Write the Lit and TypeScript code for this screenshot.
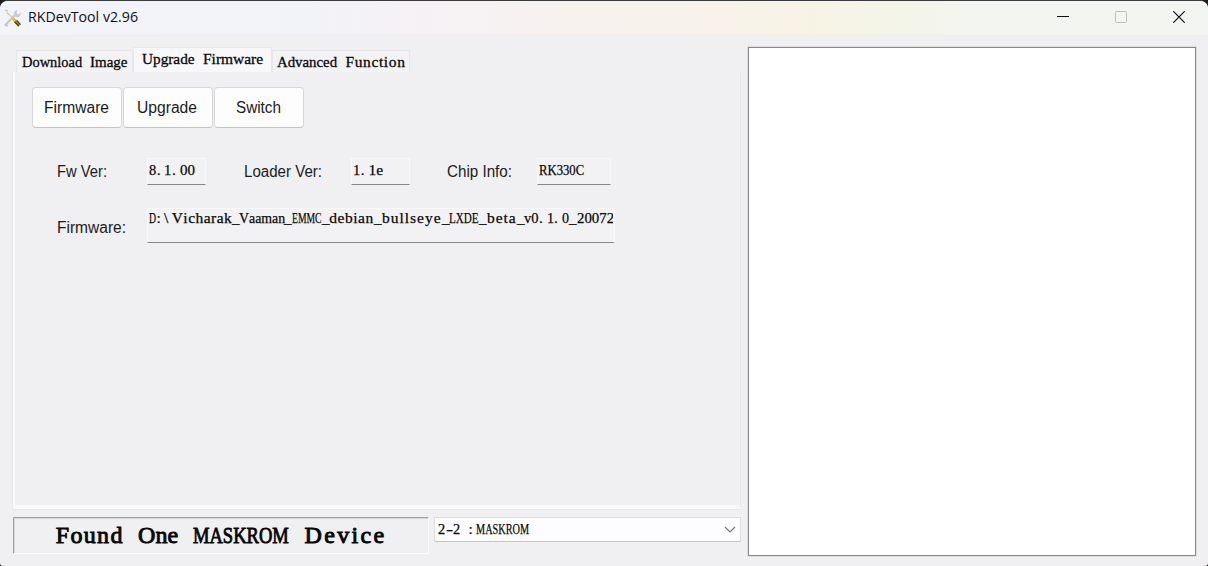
import { LitElement, html, css } from "lit";
import { customElement, property } from "lit/decorators.js";

const ctx = document.createElement("canvas").getContext("2d")!;

/** A run of text scaled to an exact advance width. */
@customElement("fit-text")
class FitText extends LitElement {
  static styles = css`
    :host { display: inline-block; white-space: pre; }
    .run { display: inline-block; white-space: pre; transform-origin: 0 50%; }
  `;
  @property() text = "";
  @property({ type: Number }) width = 0;
  render() {
    const cs = getComputedStyle(this);
    ctx.font = `${cs.fontWeight} ${cs.fontSize} ${cs.fontFamily}`;
    const natural = ctx.measureText(this.text).width;
    return html`<span class="run" style="width:${this.width}px;transform:scaleX(${this.width / natural})">${this.text}</span>`;
  }
}

/** Fixed-pitch serif text: each word takes a whole number of cells. */
@customElement("cell-text")
class CellText extends LitElement {
  static styles = css`
    :host { display: inline-block; white-space: pre; font-family: "Liberation Serif", serif; font-kerning: none; }
    .word { display: inline-block; white-space: pre; }
    .run { display: inline-block; white-space: pre; transform-origin: 0 50%; }
  `;
  @property() text = "";
  @property({ type: Number }) pitch = 7.5;
  render() {
    const cs = getComputedStyle(this);
    ctx.font = `${cs.fontWeight} ${cs.fontSize} ${cs.fontFamily}`;
    const parts = this.text.match(/[A-Za-z0-9]+|[^A-Za-z0-9]/g) ?? [];
    return html`${parts.map((p) => {
      const cell = p.length * this.pitch;
      const natural = ctx.measureText(p).width;
      const word = /[A-Za-z0-9_-]/.test(p);
      const room = cell - (p === "_" ? 0 : this.pitch * 0.06);
      const scale = word && (natural > room || p === "_" || p === "-") ? room / natural : 1;
      const gap = word && scale === 1 ? (room - natural) / p.length : 0;
      return html`<span class="word" style="width:${cell}px"><span class="run" style="letter-spacing:${gap}px;margin-left:${gap / 2}px;transform:scaleX(${scale})">${p}</span></span>`;
    })}`;
  }
}

@customElement("app-root")
class AppRoot extends LitElement {
  static styles = css`
    :host { display: block; width: 1208px; height: 566px; background: #1d1b1c; }
    * { box-sizing: border-box; }
    svg { display: block; }
    .window {
      height: 566px; display: flex; flex-direction: column; overflow: hidden;
      background: #f0eff1; border-top: 1px solid #3b3a3c; border-radius: 8px 8px 3px 3px;
      font: 16px "Liberation Sans", sans-serif; color: #1b1b1b;
    }
    .bar {
      height: 34px; flex: none; display: flex; align-items: center; padding-left: 4px;
      background: linear-gradient(90deg, #f3f4f9 0%, #f1f3f8 25%, #f6f1f5 35%, #f7f2ef 46%, #f8f2ea 60%, #f7f3e4 67%, #f3f5e8 74%, #f3f5f0 80%, #f3f5f2 100%);
    }
    .name { margin: -4px auto 0 6px; font: 15px "Open Sans", sans-serif; color: #111; }
    .ctl { width: 58px; display: flex; justify-content: center; margin-top: -2px; }
    .body { flex: 1; display: flex; padding: 12px 12px 10px 13px; gap: 7px; min-height: 0; }
    .left { width: 728px; display: flex; flex-direction: column; }
    .tabs { height: 25px; display: flex; align-items: flex-end; padding-left: 3px; }
    .tab {
      height: 22px; padding: 2px 0 0 5px; border: 1px solid #e7e6e8; border-bottom: 0;
      background: #f3f2f4; font-size: 15.5px; line-height: 18px; color: #080808; -webkit-text-stroke: .3px #080808;
    }
    .tab.a { width: 117px; }
    .tab.b { width: 139px; height: 25px; background: #f8f8fa; padding-left: 8px; }
    .tab.c { width: 138px; padding-left: 4px; }
    .panel {
      height: 437px; border-left: 2px solid #fafafb; border-right: 1px solid #e6e5e7;
      border-bottom: 4px solid #f9f8fa; padding: 15px 0 0 16px; box-shadow: 0 1px 0 #e6e5e7, -1px 1px 0 #e8e7e9;
    }
    .buttons { display: flex; gap: 1px; margin-left: 1px; }
    .btn {
      width: 90px; height: 41px; background: #fdfdfe; border: 1px solid #d8d7d9; border-bottom-color: #c3c2c4;
      border-radius: 4px; font: inherit; color: inherit; padding: 0 2px 0 0; display: flex; justify-content: center; align-items: center;
    }
    .row { display: flex; align-items: flex-start; margin: 30px 0 0 26px; }
    .row.two { margin-top: 23px; }
    .label { line-height: 18px; padding-top: 5px; flex: none; }
    .row.two .label { padding-top: 11px; }
    .field {
      height: 27px; background: #f2f1f3; border: 1px solid #f8f7f9; border-bottom: 1px solid #858487;
      padding: 2px 0 0 1px; font-size: 15.5px; line-height: 18px; overflow: hidden; color: #080808; white-space: nowrap;
      -webkit-text-stroke: .25px #080808;
    }
    .field.long { width: 468px; height: 35px; border-right-width: 2px; padding-top: 0; }
    .foot { display: flex; gap: 5px; margin-top: 8px; }
    .status {
      width: 416px; height: 37px; border: 1px solid #a09fa1; border-right-color: #fafafa; border-bottom-color: #fcfcfc;
      box-shadow: inset 1px 1px 0 #d6d5d7;
      padding: 3px 0 0 41px; font-size: 24px; line-height: 27px; color: #050505; -webkit-text-stroke: .9px #050505;
    }
    .select {
      width: 307px; height: 25px; display: flex; align-items: center; justify-content: space-between;
      background: #fdfcfe; border: 1px solid #dedde0; border-bottom-color: #c5c4c7; padding: 0 4px 2px 3px;
      font-size: 15.5px; line-height: 18px; color: #080808; -webkit-text-stroke: .25px #080808;
    }
    .select svg { margin-top: 2px; }
    .log { flex: 1; background: #fff; border: 1px solid #87888b; box-shadow: 0 0 0 1px #dededf; }
  `;
  render() {
    return html`<div class="window">
      <div class="bar">
        <svg width="18" height="20" viewBox="0 0 18 20" fill="none">
          <path d="M1 17.5 11 7M1 15.8l2.6 2.4" stroke="#c3c7cd" stroke-width="2.2"/>
          <path d="M10 7.5c-.8-2.8.5-5 3.2-5.6L12.5 5l2 1.5 2.4-1.8c.2 3.3-2 5-4.9 4.4" fill="#c9cdd3"/>
          <path d="M2.5 4 9 10.5" stroke="#dcd2a8" stroke-width="1.6"/><path d="M1 2l3 1" stroke="#ccc" stroke-width="1.4"/>
          <path d="m8.5 10 2.5 2.8" stroke="#e0c63c" stroke-width="3"/>
          <path d="m11 12.8 4.5 4.7" stroke="#a8902c" stroke-width="3.8"/><path d="m10.8 14 4 4M13 12.7l3.5 4" stroke="#4a4634" stroke-width="1.2"/>
        </svg>
        <fit-text class="name" text="RKDevTool v2.96" width="110"></fit-text>
        <div class="ctl"><svg width="12" height="12"><path d="M0 5.5h12" stroke="#111" stroke-width="1.2"/></svg></div>
        <div class="ctl"><svg width="12" height="12"><rect x=".5" y=".5" width="11" height="11" rx="1" fill="none" stroke="#bfc0bd"/></svg></div>
        <div class="ctl"><svg width="12" height="12"><path d="m.3.3 11.4 11.4M11.7.3.3 11.7" stroke="#111" stroke-width="1.2"/></svg></div>
      </div>
      <div class="body">
        <div class="left">
          <div class="tabs">
            <div class="tab a"><cell-text text="Download Image" pitch="7.57"></cell-text></div>
            <div class="tab b"><cell-text text="Upgrade Firmware" pitch="7.57"></cell-text></div>
            <div class="tab c"><cell-text text="Advanced Function" pitch="7.57"></cell-text></div>
          </div>
          <div class="panel">
            <div class="buttons">
              <button class="btn"><fit-text text="Firmware" width="65"></fit-text></button>
              <button class="btn"><fit-text text="Upgrade" width="60"></fit-text></button>
              <button class="btn"><fit-text text="Switch" width="45"></fit-text></button>
            </div>
            <div class="row">
              <fit-text class="label" style="width:90px" text="Fw Ver:" width="50"></fit-text>
              <div class="field" style="width:59px"><cell-text text="8.1.00" pitch="7.7"></cell-text></div>
              <fit-text class="label" style="width:107px;margin-left:38px" text="Loader Ver:" width="78"></fit-text>
              <div class="field" style="width:59px"><cell-text text="1.1e" pitch="7.7"></cell-text></div>
              <fit-text class="label" style="width:90px;margin-left:37px" text="Chip Info:" width="65"></fit-text>
              <div class="field" style="width:74px"><cell-text text="RK330C" pitch="7.6"></cell-text></div>
            </div>
            <div class="row two">
              <fit-text class="label" style="width:90px" text="Firmware:" width="69"></fit-text>
              <div class="field long"><cell-text text="D:\\Vicharak_Vaaman_EMMC_debian_bullseye_LXDE_beta_v0.1.0_20072" pitch="7.5"></cell-text></div>
            </div>
          </div>
          <div class="foot">
            <div class="status"><cell-text text="Found One MASKROM Device" pitch="13.8"></cell-text></div>
            <div class="select"><cell-text text="2-2 :MASKROM" pitch="7.65"></cell-text>
              <svg width="12" height="7" fill="none"><path d="m1 1 5 5 5-5" stroke="#77767a" stroke-width="1.2"/></svg></div>
          </div>
        </div>
        <div class="log"></div>
      </div>
    </div>`;
  }
}
